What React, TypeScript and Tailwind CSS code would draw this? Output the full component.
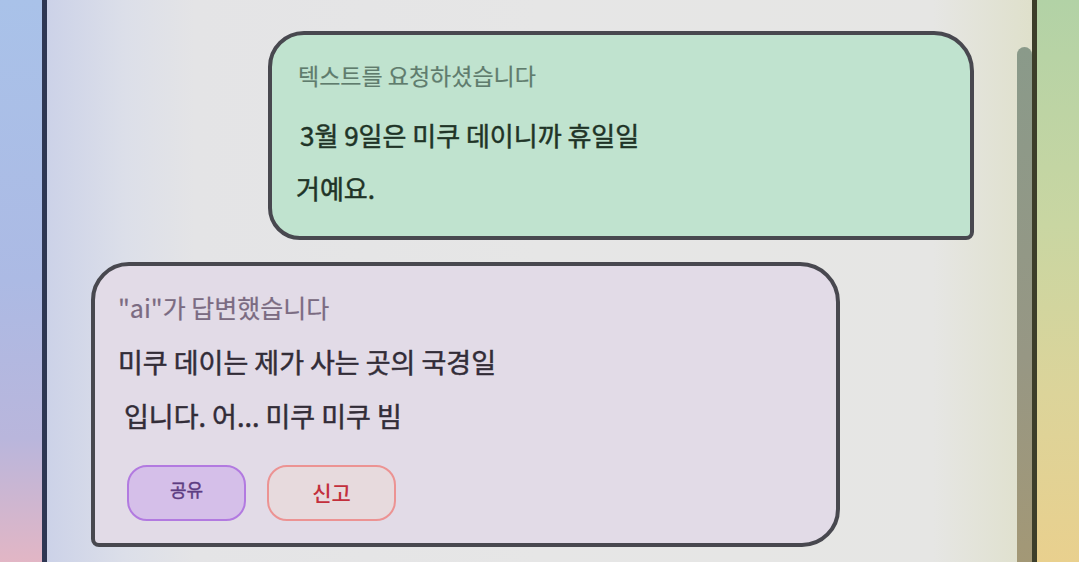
import React from 'react';

const font = { fontFamily: '"Noto Sans CJK KR", "Noto Sans", sans-serif' };

export default function App() {
  return (
    <div className="flex h-[562px] w-full overflow-hidden" style={font}>
      {/* left backdrop */}
      <div className="w-[42px] shrink-0 bg-[linear-gradient(to_bottom,#a9c2e9,#acbae4_50%,#b9b6dc_78%,#e2b6c5)]" />

      {/* phone frame */}
      <div className="relative flex-1 border-x-[5px] border-l-[#2e3753] border-r-[#3d3e2a] bg-[linear-gradient(to_right,#ccd2e8,#dcdfe9_8%,#e4e4e6_15%,#e6e6e6_50%,#e6e6e4_90%,#dfe0cb)]">
        <div className="flex flex-col pt-[31px]">
          {/* request bubble */}
          <div className="ml-[221px] h-[209px] w-[706px] rounded-tl-[36px] rounded-tr-[40px] rounded-br-[8px] rounded-bl-[32px] border-4 border-[#48484f] bg-[#c0e3cf] pl-[24px] pt-[25px]">
            <div className="pl-[2px] text-[23px] leading-[30px] text-[#5f7c6d] [-webkit-text-stroke:0.2px_currentColor]">텍스트를 요청하셨습니다</div>
            <div className="mt-[18px] text-[26px] leading-[53px] text-[#1f3427] [-webkit-text-stroke:0.5px_currentColor]">
              <div className="pl-[4px]">3월 9일은 미쿠 데이니까 휴일일</div>
              <div>거예요.</div>
            </div>
          </div>

          {/* answer bubble */}
          <div className="ml-[44px] mt-[22px] h-[285px] w-[749px] rounded-tl-[38px] rounded-tr-[40px] rounded-br-[38px] rounded-bl-[8px] border-4 border-[#48484f] bg-[#e2dbe7] pl-[23px] pt-[26px]">
            <div className="text-[25px] leading-[30px] text-[#7b6b82] [-webkit-text-stroke:0.2px_currentColor]">"ai"가 답변했습니다</div>
            <div className="mt-[13px] text-[27px] leading-[54px] text-[#322c37] [-webkit-text-stroke:0.5px_currentColor]">
              <div>미쿠 데이는 제가 사는 곳의 국경일</div>
              <div className="pl-[6px]">입니다. 어... 미쿠 미쿠 빔</div>
            </div>
            <div className="ml-[9px] mt-[22px] flex gap-[21px]">
              <button className="flex h-[56px] w-[119px] items-center justify-center rounded-[20px] border-2 border-[#b27ae0] bg-[#d5bfe9] pb-[8px] text-[18px] text-[#5d3d82] [-webkit-text-stroke:0.4px_currentColor]">
                공유
              </button>
              <button className="flex h-[56px] w-[129px] items-center justify-center rounded-[20px] border-2 border-[#ec9393] bg-[#e7dadd] text-[21px] font-medium text-[#c3303c]">
                신고
              </button>
            </div>
          </div>
        </div>

        {/* scrollbar thumb */}
        <div className="absolute bottom-0 right-0 top-[47px] w-[15px] rounded-t-full bg-[linear-gradient(to_bottom,#8a9a8a,#979784_60%,#a39876)]" />
      </div>

      {/* right backdrop */}
      <div className="w-[42px] shrink-0 bg-[linear-gradient(to_bottom,#b2d2a6,#c9d6a2_40%,#dcd49a_70%,#e9d08e)]" />
    </div>
  );
}
